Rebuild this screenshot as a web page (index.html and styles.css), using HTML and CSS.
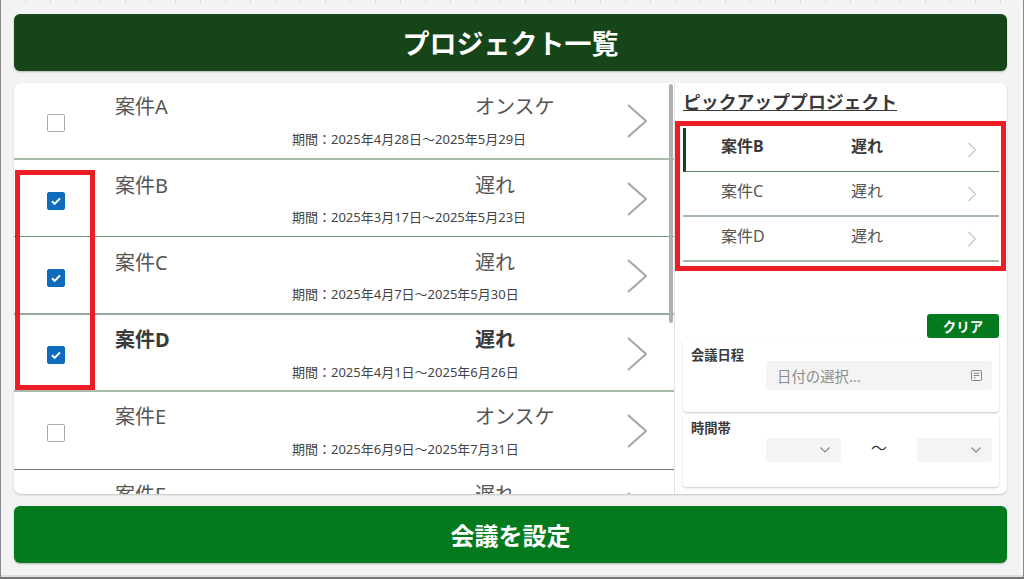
FILE: index.html
```html
<!DOCTYPE html>
<html lang="ja">
<head>
<meta charset="utf-8">
<title>プロジェクト一覧</title>
<link rel="stylesheet" href="styles.css">
</head>
<body>
<div class="frame">
  <header class="title-bar">プロジェクト一覧</header>
  <main class="panel">
    <section class="list">
      <div class="row">
        <div class="check-cell"><span class="check"></span></div>
        <div class="row-main">
          <div class="row-top"><span class="name">案件A</span><span class="status">オンスケ</span></div>
          <div class="period">期間：2025年4月28日～2025年5月29日</div>
        </div>
        <svg class="chev" viewBox="0 0 20 34"><path d="M1 1l18 16L1 33"/></svg>
      </div>
      <div class="row">
        <div class="check-cell"><span class="check on"><svg viewBox="0 0 16 16"><path d="M4 8.300l2.700 2.600L12 5.400"/></svg></span></div>
        <div class="row-main">
          <div class="row-top"><span class="name">案件B</span><span class="status">遅れ</span></div>
          <div class="period">期間：2025年3月17日～2025年5月23日</div>
        </div>
        <svg class="chev" viewBox="0 0 20 34"><path d="M1 1l18 16L1 33"/></svg>
      </div>
      <div class="row">
        <div class="check-cell"><span class="check on"><svg viewBox="0 0 16 16"><path d="M4 8.300l2.700 2.600L12 5.400"/></svg></span></div>
        <div class="row-main">
          <div class="row-top"><span class="name">案件C</span><span class="status">遅れ</span></div>
          <div class="period">期間：2025年4月7日～2025年5月30日</div>
        </div>
        <svg class="chev" viewBox="0 0 20 34"><path d="M1 1l18 16L1 33"/></svg>
      </div>
      <div class="row bold">
        <div class="check-cell"><span class="check on"><svg viewBox="0 0 16 16"><path d="M4 8.300l2.700 2.600L12 5.400"/></svg></span></div>
        <div class="row-main">
          <div class="row-top"><span class="name">案件D</span><span class="status">遅れ</span></div>
          <div class="period">期間：2025年4月1日～2025年6月26日</div>
        </div>
        <svg class="chev" viewBox="0 0 20 34"><path d="M1 1l18 16L1 33"/></svg>
      </div>
      <div class="row">
        <div class="check-cell"><span class="check"></span></div>
        <div class="row-main">
          <div class="row-top"><span class="name">案件E</span><span class="status">オンスケ</span></div>
          <div class="period">期間：2025年6月9日～2025年7月31日</div>
        </div>
        <svg class="chev" viewBox="0 0 20 34"><path d="M1 1l18 16L1 33"/></svg>
      </div>
      <div class="row">
        <div class="check-cell"><span class="check"></span></div>
        <div class="row-main">
          <div class="row-top"><span class="name">案件F</span><span class="status">遅れ</span></div>
        </div>
        <svg class="chev" viewBox="0 0 20 34"><path d="M1 1l18 16L1 33"/></svg>
      </div>
      <div class="scrollbar"></div>
    </section>
    <aside class="side">
      <h2 class="side-title">ピックアッププロジェクト</h2>
      <div class="picks">
        <div class="pick active"><span class="pick-name">案件B</span><span class="pick-status">遅れ</span><svg class="pick-chev" viewBox="0 0 8 16"><path d="M.5 1l7 7-7 7"/></svg></div>
        <div class="pick"><span class="pick-name">案件C</span><span class="pick-status">遅れ</span><svg class="pick-chev" viewBox="0 0 8 16"><path d="M.5 1l7 7-7 7"/></svg></div>
        <div class="pick"><span class="pick-name">案件D</span><span class="pick-status">遅れ</span><svg class="pick-chev" viewBox="0 0 8 16"><path d="M.5 1l7 7-7 7"/></svg></div>
      </div>
      <div class="clear-wrap"><button class="clear">クリア</button></div>
      <div class="card date-card">
        <div class="label">会議日程</div>
        <div class="date-input"><span>日付の選択...</span>
          <svg class="cal" viewBox="0 0 12 12"><rect x=".5" y=".5" width="11" height="11" rx="1.500"/><path d="M3 3.500h6M3 6h6M3 8.500h2"/></svg>
        </div>
      </div>
      <div class="card time-card">
        <div class="label">時間帯</div>
        <div class="time-row">
          <div class="select"><svg class="caret" viewBox="0 0 10 6"><path d="M.5.5L5 5 9.500.5"/></svg></div>
          <span class="tilde">～</span>
          <div class="select"><svg class="caret" viewBox="0 0 10 6"><path d="M.5.5L5 5 9.500.5"/></svg></div>
        </div>
      </div>
    </aside>
    <div class="mark mark-checks"></div>
    <div class="mark mark-picks"></div>
  </main>
  <button class="submit">会議を設定</button>
</div>
</body>
</html>
```
FILE: styles.css
```css
* { box-sizing: border-box; }
html, body { margin: 0; height: 579px; overflow: hidden; }
body {
  font-family: "Noto Sans", "Noto Sans CJK JP", sans-serif;
  color: #444;
  background: #fff;
}
.frame {
  position: relative;
  width: 1024px;
  height: 579px;
  padding: 14px 16px 14px 13px;
  display: flex;
  flex-direction: column;
  gap: 12px;
  background: #f3f3f3;
  border-left: 1px solid #8a8a8a;
  border-right: 1px solid #8a8a8a;
  border-bottom: 2px solid #777;
  box-shadow: inset 0 -2px 0 #dedede, inset -3px 0 0 #f8f8f8;
}
.frame::before {
  content: "";
  position: absolute;
  inset: 0 0 auto 0;
  height: 3px;
  background: repeating-linear-gradient(90deg, #f3f3f3 0 24px, #d9d9d9 24px 25px);
}
.title-bar {
  height: 57px;
  flex: none;
  display: flex;
  align-items: center;
  justify-content: center;
  background: #16451a;
  color: #fff;
  font-size: 27px;
  font-weight: 700;
  border-radius: 6px;
  box-shadow: 0 1px 2px rgba(0,0,0,.25);
}
.panel {
  height: 411px;
  flex: none;
  display: flex;
  position: relative;
  background: #fff;
  border-radius: 7px;
  box-shadow: 0 1px 2px rgba(0,0,0,.2);
}
.list {
  width: 661px;
  flex: none;
  position: relative;
  overflow: hidden;
  border-radius: 7px 0 0 7px;
  border-right: 1px solid #e2e2e2;
}
.row {
  height: 77.22px;
  display: flex;
  border-bottom: 2px solid #a9bcab;
  padding-right: 7px;
  position: relative;
}
.row:nth-child(2) { border-bottom: 1px solid #6f9273; }
.row:nth-child(3) { border-bottom-color: #9aa89b; }
.row:nth-child(5) { height: 78px; border-bottom: 1px solid #707e71; }
.check-cell {
  width: 84px;
  flex: none;
  display: flex;
  align-items: center;
  justify-content: center;
  padding-top: 6px;
}
.row:first-child .check-cell { padding-top: 4px; }
.check {
  width: 18px;
  height: 18px;
  display: block;
  background: #fff;
  border: 1px solid #aaa;
  border-radius: 2px;
}
.check.on { background: #0f6cbd; border-color: #0f6cbd; }
.check svg { width: 16px; height: 16px; display: block; fill: none; stroke: #fff; stroke-width: 2; }
.row-main {
  width: 529px;
  flex: none;
  padding: 11px 0 0 17px;
}
.row:first-child .row-main { padding-top: 9px; }
.row-top { display: flex; height: 26px; align-items: center; font-size: 20px; color: #555; }
.name { width: 360px; flex: none; }
.period { margin-top: 12px; padding-left: 177px; font-size: 13px; line-height: 17px; color: #444; }
.row:first-child .period { margin-top: 13px; }
.bold .name, .bold .status { font-weight: 700; color: #3a3a3a; }
.chev {
  width: 20px;
  height: 34px;
  flex: none;
  margin-top: 22px;
  fill: none;
  stroke: #a6a6a6;
  stroke-width: 2;
}
.row:first-child .chev { margin-top: 21px; }
.scrollbar {
  position: absolute;
  left: 655px;
  top: 1px;
  width: 4px;
  height: 239px;
  background: #b0b0b0;
  border-radius: 2px;
}
.side {
  flex: 1;
  min-width: 0;
  padding: 0 8px;
  display: flex;
  flex-direction: column;
}
.side-title {
  margin: 6px 0 0;
  height: 26px;
  font-size: 17.85px;
  line-height: 26px;
  font-weight: 700;
  color: #3a3a3a;
  text-decoration: underline;
}
.picks { margin-top: 13px; }
.pick {
  height: 45px;
  display: flex;
  align-items: flex-start;
  padding: 9px 0 0 38px;
  font-size: 16px;
  line-height: 20px;
  color: #555;
  border-bottom: 2px solid #a3b8a5;
  position: relative;
}
.pick.active {
  height: 44px;
  padding-top: 8px;
  font-weight: 700;
  color: #3a3a3a;
  border-left: 3px solid #16451a;
  padding-left: 35px;
  border-bottom: 1px solid #5f8262;
}
.pick-name { width: 130px; flex: none; }
.pick-status { width: 117px; flex: none; }
.pick-chev { width: 8px; height: 16px; margin-top: 5px; fill: none; stroke: #c4c4c4; stroke-width: 1.2; }
.active .pick-chev { margin-top: 6px; }
.clear-wrap { display: flex; justify-content: flex-end; margin-top: 52px; }
.clear {
  width: 72px;
  height: 24px;
  border: 0;
  padding: 0;
  background: #047a1e;
  color: #fff;
  font: 700 13.5px "Noto Sans", "Noto Sans CJK JP", sans-serif;
  border-radius: 3px;
}
.card {
  height: 74px;
  margin-bottom: 2px;
  padding: 8px 7px 0 8px;
  background: #fff;
  border-radius: 4px;
  box-shadow: 0 1px 2px rgba(0,0,0,.22);
}
.time-card { height: 73px; padding-top: 5px; }
.label { font-size: 13.25px; line-height: 18px; font-weight: 700; color: #3a3a3a; }
.date-input {
  margin: -3px 0 0 75px;
  height: 29px;
  display: flex;
  align-items: center;
  justify-content: space-between;
  padding: 0 10px 0 11px;
  background: #f4f4f4;
  border-radius: 3px;
  font-size: 14.4px;
  color: #8c8c8c;
}
.cal { width: 11px; height: 11px; fill: none; stroke: #777; stroke-width: 1; }
.time-row {
  margin: 1px 0 0 75px;
  display: flex;
  align-items: center;
  justify-content: space-between;
}
.select {
  width: 75px;
  height: 24px;
  display: flex;
  align-items: center;
  justify-content: flex-end;
  padding-right: 11px;
  background: #f4f4f4;
  border-radius: 3px;
}
.caret { width: 10px; height: 6px; fill: none; stroke: #888; stroke-width: 1.2; }
.tilde { font-size: 16px; line-height: 16px; padding-bottom: 5px; color: #333; }
.mark {
  position: absolute;
  border: 5px solid #ee1c25;
  background: transparent;
  pointer-events: none;
}
.mark-checks { left: 1px; top: 87px; width: 80px; height: 220px; }
.mark-picks { left: 661px; top: 38px; width: 331px; height: 150px; }
.submit {
  height: 57px;
  flex: none;
  border: 0;
  padding: 0;
  background: #047a1e;
  color: #fff;
  font: 700 24px "Noto Sans", "Noto Sans CJK JP", sans-serif;
  border-radius: 6px;
  box-shadow: 0 1px 2px rgba(0,0,0,.25);
}
```
